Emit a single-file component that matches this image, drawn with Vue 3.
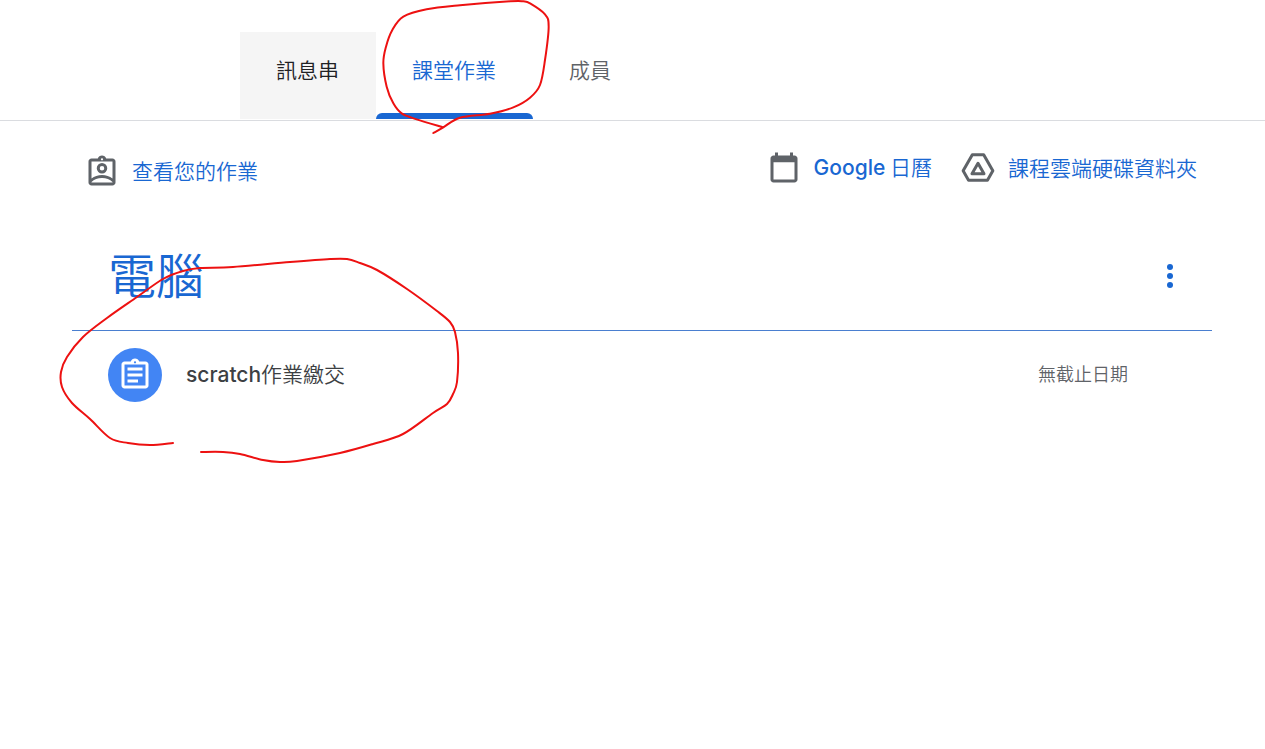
<script setup>
const tabs = [
  { label: '訊息串', state: 'hovered' },
  { label: '課堂作業', state: 'active' },
  { label: '成員', state: '' },
]

const tabLoop = [
  [640, 382], [560, 358], [515, 340], [490, 310], [470, 260], [460, 190], [468, 140], [487, 90],
  [520, 50], [590, 28], [690, 16], [840, 4], [880, 4], [900, 10], [945, 43], [956, 80], [945, 180],
  [930, 255], [900, 293], [850, 322], [780, 341], [690, 353], [640, 382], [610, 399],
].map(([x, y]) => [x / 3 + 230, y / 3])

const workLoop = [
  [173, 443], [150, 445], [128, 443], [110, 438], [90, 419], [72, 403], [62, 387], [61, 372],
  [67, 357], [83, 337], [107, 318], [137, 297], [163, 279], [183, 271], [200, 268], [233, 267],
  [290, 262], [330, 259], [347, 259], [360, 263], [377, 270], [407, 289], [437, 311], [450, 322],
  [455, 332], [458, 353], [457, 382], [453, 394], [447, 404], [433, 413], [403, 434], [373, 444],
  [340, 453], [297, 461], [280, 462], [263, 460], [240, 454], [223, 452], [201, 452],
]

// Smooth pen stroke through the given points
function stroke(points) {
  let d = `M${points[0]}`
  for (let i = 0; i < points.length - 1; i++) {
    const a = points[i - 1] || points[i]
    const b = points[i]
    const c = points[i + 1]
    const e = points[i + 2] || c
    d += `C${b[0] + (c[0] - a[0]) / 6},${b[1] + (c[1] - a[1]) / 6} `
    d += `${c[0] - (e[0] - b[0]) / 6},${c[1] - (e[1] - b[1]) / 6} ${c[0]},${c[1]}`
  }
  return d
}
</script>

<template>
  <div class="page">
    <nav class="tabs">
      <a v-for="tab in tabs" :key="tab.label" href="#" class="tab" :class="tab.state">{{ tab.label }}</a>
    </nav>

    <main>
      <div class="toolbar">
        <a href="#" class="link own">
          <svg class="icon" viewBox="0 0 24 24" aria-hidden="true">
            <path fill-rule="evenodd" d="M19 3h-4.180C14.400 1.840 13.300 1 12 1s-2.400.84-2.820 2H5c-1.100 0-2 .9-2 2v14c0 1.100.9 2 2 2h14c1.100 0 2-.9 2-2V5c0-1.100-.9-2-2-2zM12 2.750a.75.75 0 1 1 0 1.500.75.75 0 0 1 0-1.500zM5 5h14v11.300C17.100 14.800 14.700 14 12 14s-5.100.8-7 2.300zM5 19v-.4C6.700 17 9.200 16 12 16s5.300 1 7 2.600v.4z" />
            <path fill-rule="evenodd" d="M12 6a3.500 3.500 0 1 0 0 7 3.500 3.500 0 0 0 0-7zm0 2a1.500 1.500 0 1 1 0 3 1.500 1.500 0 0 1 0-3z" />
          </svg>
          <span class="text">查看您的作業</span>
        </a>
        <div class="shared">
          <a href="#" class="link">
            <svg class="icon" viewBox="0 0 24 24" aria-hidden="true">
              <path fill-rule="evenodd" d="M19 3h-1V1h-2v2H8V1H6v2H5c-1.100 0-2 .9-2 2v14c0 1.100.9 2 2 2h14c1.100 0 2-.9 2-2V5c0-1.100-.9-2-2-2zm0 16H5V7.500h14z" />
            </svg>
            <span class="text"><span class="latin">Google</span> 日曆</span>
          </a>
          <a href="#" class="link">
            <svg class="icon drive" viewBox="0 0 24 24" aria-hidden="true">
              <path d="M8.200 2.500h7.600l6.100 10.700-3.600 6.300H5.700l-3.600-6.300z" />
              <path d="M12 8.200l4 6.900H8z" />
            </svg>
            <span class="text">課程雲端硬碟資料夾</span>
          </a>
        </div>
      </div>

      <section>
        <header class="topic">
          <h1>電腦</h1>
          <button type="button" class="more" aria-label="更多選項">
            <svg viewBox="0 0 24 24" aria-hidden="true">
              <circle cx="12" cy="6" r="2" /><circle cx="12" cy="12" r="2" /><circle cx="12" cy="18" r="2" />
            </svg>
          </button>
        </header>
        <a href="#" class="work">
          <span class="badge">
            <svg class="icon" viewBox="0 0 24 24" aria-hidden="true">
              <path fill-rule="evenodd" d="M19 3h-4.180C14.400 1.840 13.300 1 12 1s-2.400.84-2.820 2H5c-1.100 0-2 .9-2 2v14c0 1.100.9 2 2 2h14c1.100 0 2-.9 2-2V5c0-1.100-.9-2-2-2zM12 2.750a.75.75 0 1 1 0 1.500.75.75 0 0 1 0-1.500zM5 5h14v14H5z" />
              <path d="M7 7h10v2H7zM7 11h10v2H7zM7 15h7v2H7z" />
            </svg>
          </span>
          <span class="name"><span class="latin">scratch</span>作業繳交</span>
          <span class="text due">無截止日期</span>
        </a>
      </section>
    </main>

    <svg class="ink" width="560" height="480" aria-hidden="true">
      <path :d="stroke(tabLoop)" />
      <path :d="stroke(workLoop)" />
    </svg>
  </div>
</template>

<style>
body {
  background: #fff;
}
</style>

<style scoped>
.page {
  position: relative;
  min-height: 100vh;
  font-family: "Noto Sans CJK TC", sans-serif;
  font-size: 21px;
  font-weight: 350;
  line-height: 30px;
  color: #3c4043;
}
a {
  color: inherit;
  text-decoration: none;
}
.latin {
  font-family: Inter, sans-serif;
  font-weight: 500;
}
.tabs {
  display: flex;
  height: 88px;
  padding: 32px 0 0 240px;
  border-bottom: 1px solid #dadce0;
}
.tab {
  position: relative;
  height: 87px;
  box-sizing: border-box;
  padding: 22px 37px 0 36px;
  color: #5f6368;
}
.tab.hovered {
  background: #f5f5f5;
  color: #202124;
}
.tab.active {
  color: #1967d2;
}
.tab.active::after {
  content: "";
  position: absolute;
  left: 0;
  right: 0;
  bottom: 0;
  height: 6px;
  border-radius: 6px 6px 0 0;
  background: #1967d2;
}
main {
  margin: 0 53px 0 72px;
}
.toolbar {
  display: flex;
  justify-content: space-between;
  padding: 30px 15px 0 12px;
}
.shared {
  display: flex;
  gap: 28px;
}
.link {
  display: flex;
  align-items: center;
  gap: 12px;
  height: 36px;
  color: #1967d2;
}
.own {
  margin-top: 3px;
}
.text {
  padding-bottom: 4px;
}
.name {
  padding-bottom: 2px;
}
.icon {
  flex: none;
  width: 36px;
  height: 36px;
  fill: #5f6368;
}
.drive path {
  fill: none;
  stroke: #5f6368;
  stroke-width: 2;
  stroke-linejoin: round;
}
.topic {
  display: flex;
  align-items: center;
  justify-content: space-between;
  height: 108px;
  margin-top: 32px;
  padding: 0 24px 0 36px;
  border-bottom: 1px solid #4a7fd0;
}
h1 {
  margin: 0;
  padding-bottom: 6px;
  font-size: 48px;
  font-weight: 350;
  line-height: 60px;
  color: #1967d2;
}
.more {
  width: 36px;
  height: 36px;
  padding: 0;
  border: 0;
  background: none;
}
.more svg {
  display: block;
  width: 36px;
  height: 36px;
  fill: #1967d2;
}
.work {
  display: flex;
  align-items: center;
  padding: 17px 84px 17px 36px;
}
.badge {
  display: flex;
  align-items: center;
  justify-content: center;
  width: 54px;
  height: 54px;
  margin-right: 24px;
  border-radius: 50%;
  background: #4285f4;
}
.badge .icon {
  fill: #fff;
}
.due {
  margin-left: auto;
  font-size: 18px;
  color: #5f6368;
}
.ink {
  position: absolute;
  top: 0;
  left: 0;
  pointer-events: none;
}
.ink path {
  fill: none;
  stroke: #ed1111;
  stroke-width: 2;
  stroke-linecap: round;
  stroke-linejoin: round;
}
</style>
